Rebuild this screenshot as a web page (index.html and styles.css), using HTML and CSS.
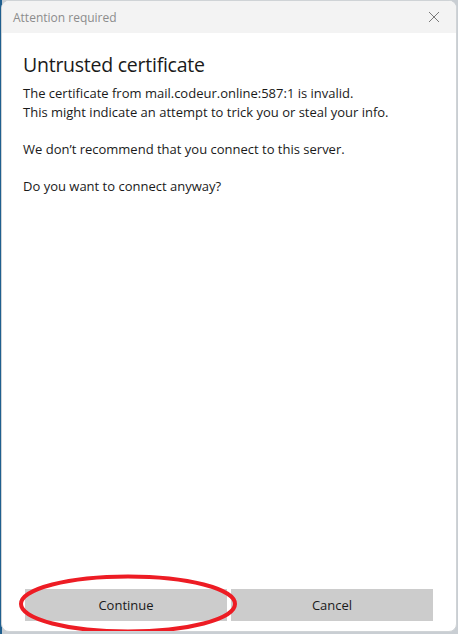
FILE: index.html
```html
<!DOCTYPE html>
<html>
<head>
<meta charset="utf-8">
<link rel="stylesheet" href="styles.css">
</head>
<body>
<div class="window">
  <div class="titlebar">
    <span class="title">Attention required</span>
    <svg class="close" width="12" height="12" viewBox="0 0 12 12"><path d="M1 1 L11 11 M11 1 L1 11" stroke="#7a7a7a" stroke-width="1" fill="none"/></svg>
  </div>
  <div class="content">
    <h1 class="heading">Untrusted certificate</h1>
    <p class="text">The certificate from mail.codeur.online:587:1 is invalid.<br>This might indicate an attempt to trick you or steal your info.</p>
    <p class="text">We don’t recommend that you connect to this server.</p>
    <p class="text">Do you want to connect anyway?</p>
  </div>
  <div class="buttons">
    <button class="btn">Continue</button>
    <button class="btn">Cancel</button>
  </div>
  <svg class="mark" width="222" height="62" viewBox="0 0 222 62"><ellipse cx="111" cy="31" rx="107" ry="27.5" fill="none" stroke="#ed1c24" stroke-width="4"/></svg>
</div>
</body>
</html>
```
FILE: styles.css
```css
html, body {
  margin: 0;
  padding: 0;
}
body {
  width: 458px;
  height: 634px;
  background: linear-gradient(to right, #1f5f8f 0, #1f5f8f 2px, #c9ced3 2px);
  font-family: "Open Sans", "Noto Sans", sans-serif;
  overflow: hidden;
}
.window {
  position: relative;
  box-sizing: border-box;
  width: 456px;
  height: 632px;
  margin-left: 1px;
  background: #fff;
  border: 1px solid #cfd3d6;
  border-radius: 8px;
  display: flex;
  flex-direction: column;
  overflow: hidden;
}
.titlebar {
  height: 32px;
  flex: none;
  background: #f3f3f3;
  display: flex;
  align-items: center;
  justify-content: space-between;
  padding: 0 16px 0 11px;
}
.title {
  font-size: 12px;
  color: #8c8c8c;
}
.close {
  display: block;
}
.content {
  flex: 1;
  padding: 19px 21px 0 21px;
}
.heading {
  margin: 0 0 6px 0;
  font-size: 19.5px;
  letter-spacing: -0.25px;
  font-weight: 400;
  color: #1a1a1a;
  line-height: 26px;
}
.text {
  margin: 0 0 18.5px 0;
  font-size: 13px;
  line-height: 18.5px;
  color: #1a1a1a;
}
.buttons {
  flex: none;
  display: grid;
  grid-template-columns: 1fr 1fr;
  gap: 4px;
  padding: 0 23px 10px 23px;
}
.btn {
  height: 32px;
  border: none;
  background: #cccccc;
  font-family: inherit;
  font-size: 13px;
  color: #1a1a1a;
  padding: 0;
}
.mark {
  position: absolute;
  left: 15px;
  top: 572px;
}
```
